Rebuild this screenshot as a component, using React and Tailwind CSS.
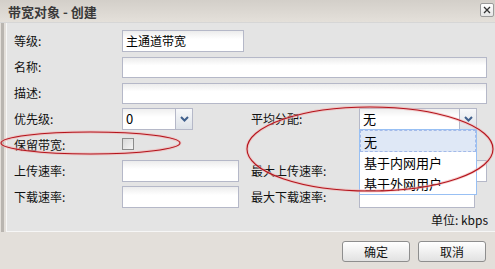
function Input({ w, h = 22 }) {
  return (
    <div
      className="border border-[#b5b8c8] bg-gradient-to-b from-[#ececec] to-white to-[40%]"
      style={{ width: w, height: h }}
    />
  );
}

function Chevron() {
  return (
    <svg width="9" height="6" viewBox="0 0 9 6">
      <path d="M1 1 L4.5 4.5 L8 1" fill="none" stroke="#3f5f8c" strokeWidth="2" />
    </svg>
  );
}

function Select({ w, value }) {
  return (
    <div className="flex border border-[#b5b8c8] h-[22px] bg-white" style={{ width: w }}>
      <div className="flex-1 flex items-center pl-[3px] text-[13px] bg-gradient-to-b from-[#efefef] to-white to-[40%]">
        {value}
      </div>
      <div className="w-[17px] flex items-center justify-center border-l border-[#b5b8c8] bg-gradient-to-b from-[#f7f8fa] to-[#dde2e8]">
        <Chevron />
      </div>
    </div>
  );
}

function Label({ children, w = 108 }) {
  return (
    <div className="shrink-0 text-[12px] leading-none text-[#111]" style={{ width: w }}>
      {children}
    </div>
  );
}

export default function App() {
  return (
    <div className="relative w-[495px] h-[269px] overflow-hidden bg-[#e3dfda] font-['Noto_Sans_CJK_SC',sans-serif] text-black">
      {/* title bar */}
      <div className="h-[23px] flex items-center justify-between pl-[8px] pr-[1px] bg-gradient-to-b from-[#d3cfc9] to-[#e4e0da] border-b border-[#d6d6d6]">
        <span className="font-bold text-[13px] leading-none text-[#3a3a3a]">带宽对象 - 创建</span>
        <div className="w-[14px] h-[14px] mt-[-3px] rounded-[2px] border border-[#9a9a9a] bg-gradient-to-b from-white to-[#e6e6e6] flex items-center justify-center">
          <svg width="8" height="8" viewBox="0 0 8 8">
            <path d="M1 1 L7 7 M7 1 L1 7" stroke="#333" strokeWidth="1.3" />
          </svg>
        </div>
      </div>

      {/* body */}
      <div className="flex border-l-[3px] border-[#b9b5b0] ml-[1px]">
        <div className="w-[2px] bg-[#e3dfda]" />
        <div className="flex-1 h-[209px] bg-[#e4e4e4] border-l border-b border-[#f6f6f6] pt-[7px] pl-[7px] pr-[7px] flex flex-col gap-[4px]">
          <div className="flex items-center h-[22px]">
            <Label>等级:</Label>
            <div className="relative">
              <Input w={122} h={22} />
              <span className="absolute left-[4px] top-[3px] text-[12px] leading-[16px]">主通道带宽</span>
            </div>
          </div>
          <div className="flex items-center h-[22px]">
            <Label>名称:</Label>
            <Input w={365} h={21} />
          </div>
          <div className="flex items-center h-[22px]">
            <Label>描述:</Label>
            <Input w={365} h={21} />
          </div>
          <div className="flex items-center h-[22px]">
            <Label>优先级:</Label>
            <Select w={71} value="0" />
            <div className="w-[58px]" />
            <Label>平均分配:</Label>
            <Select w={118} value="无" />
          </div>
          <div className="flex items-center h-[22px]">
            <Label>保留带宽:</Label>
            <div className="w-[12px] h-[12px] mt-[-2px] border border-[#8c8c8c] bg-gradient-to-br from-[#d8d8d8] to-[#f4f4f4]" />
          </div>
          <div className="flex items-center h-[22px]">
            <Label>上传速率:</Label>
            <Input w={117} h={22} />
            <div className="w-[12px]" />
            <Label>最大上传速率:</Label>
            <Input w={128} h={22} />
          </div>
          <div className="flex items-center h-[22px]">
            <Label>下载速率:</Label>
            <Input w={117} h={22} />
            <div className="w-[12px]" />
            <Label>最大下载速率:</Label>
            <Input w={116} h={22} />
          </div>
          <div className="flex justify-end items-center h-[16px] text-[12px] leading-none text-[#111]">
            单位: kbps
          </div>
        </div>
      </div>

      {/* footer */}
      <div className="flex justify-end gap-[8px] pt-[9px] pr-[9px]">
        <button className="w-[68px] h-[21px] rounded-[3px] border border-[#8e8e8e] bg-gradient-to-b from-white to-[#e2e2e2] text-[12px] leading-none text-[#111]">
          确定
        </button>
        <button className="w-[68px] h-[21px] rounded-[3px] border border-[#8e8e8e] bg-gradient-to-b from-white to-[#e2e2e2] text-[12px] leading-none text-[#111]">
          取消
        </button>
      </div>

      {/* dropdown list (overlay) */}
      <div className="absolute left-[359px] top-[129px] w-[118px] h-[66px] bg-white border border-[#98c0f4] text-[13px] leading-none flex flex-col">
        <div className="h-[22px] flex items-center pl-[3px] bg-[#dfe8f6] border border-dashed border-[#a3bae9]">无</div>
        <div className="h-[21px] flex items-center pl-[4px]">基于内网用户</div>
        <div className="h-[21px] flex items-center pl-[4px]">基于外网用户</div>
      </div>

      {/* red annotations */}
      <svg className="absolute left-0 top-0 pointer-events-none" width="495" height="269">
        <ellipse cx="90.5" cy="143" rx="89.5" ry="11" fill="none" stroke="#f2b0b0" strokeWidth="3" opacity="0.6" />
        <ellipse cx="90.5" cy="143" rx="89.5" ry="11" fill="none" stroke="#b3141c" strokeWidth="1.1" />
        <ellipse cx="370" cy="149" rx="123" ry="42" fill="none" stroke="#f2b0b0" strokeWidth="3" opacity="0.6" />
        <ellipse cx="370" cy="149" rx="123" ry="42" fill="none" stroke="#b3141c" strokeWidth="1.1" />
      </svg>
    </div>
  );
}
